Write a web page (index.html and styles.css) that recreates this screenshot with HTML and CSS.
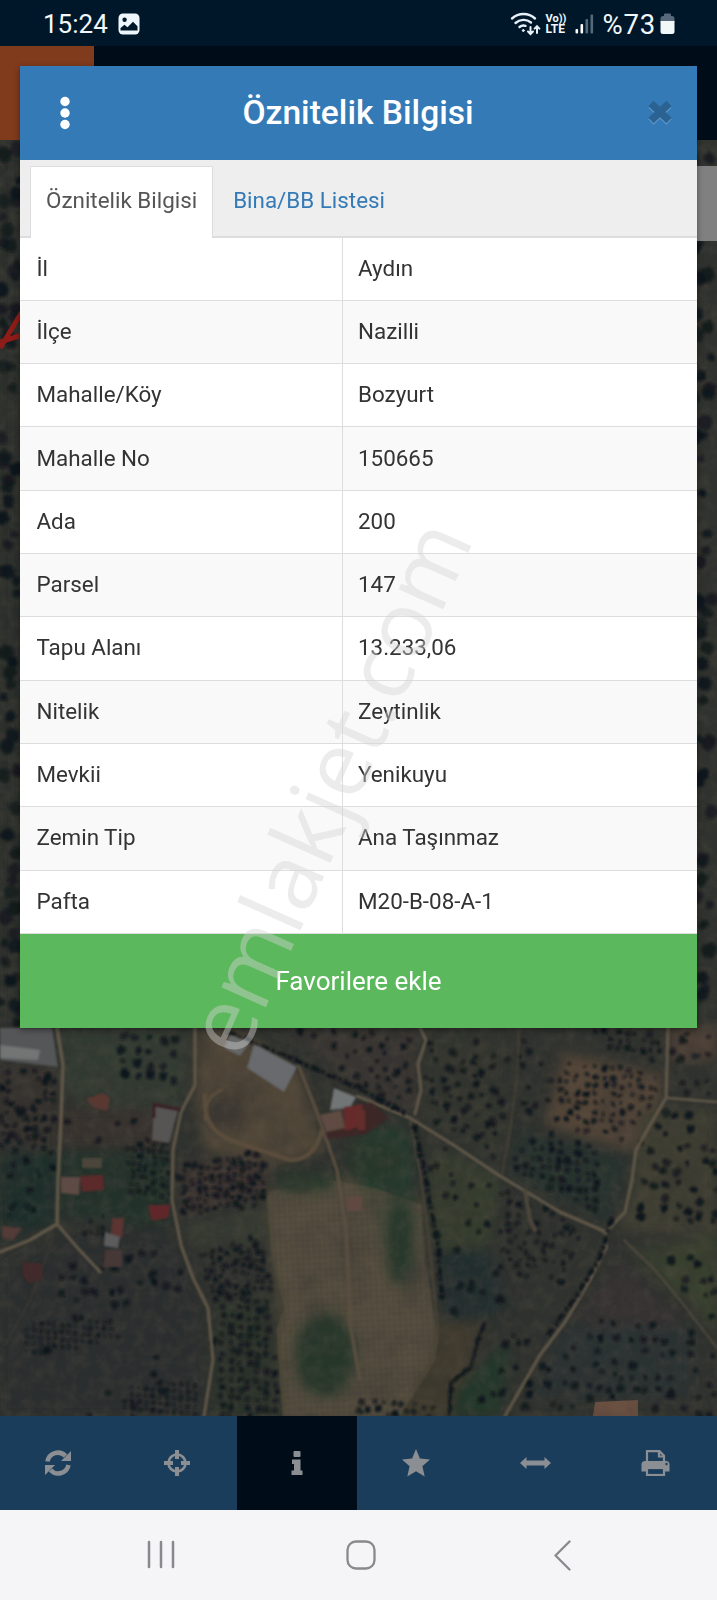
FILE: index.html
```html
<!DOCTYPE html>
<html lang="tr">
<head>
  <meta charset="UTF-8">
  <meta name="viewport" content="width=device-width, initial-scale=1.0">
  <title>Öznitelik Bilgisi</title>
  <link rel="stylesheet" href="styles.css">
</head>
<body>
  <div class="ekran">
    <header class="durum">
      <span class="saat">15:24</span>
      <svg class="ikon-resim" width="22" height="22" viewBox="0 0 22 22">
        <rect x="0.5" y="0.5" width="21" height="21" rx="4.5" fill="#eef6fb"/>
        <circle cx="6.6" cy="6.8" r="2.2" fill="#00172a"/>
        <path d="M2.5 17.5V15l4-3.2 3 2.4 5.5-5.4 4.5 4.5v4.2z" fill="#00172a"/>
      </svg>
      <div class="durum-sag">
        <svg width="31" height="24" viewBox="0 0 31 24" fill="none" stroke="#e8f1f8" stroke-width="2.4" stroke-linecap="round">
          <path d="M2 6.500a17 17 0 0 1 23 0M5.500 11a12 12 0 0 1 15.500 -.5M9.500 15a6.500 6.500 0 0 1 6 -1.200"/>
          <circle cx="13.300" cy="18.500" r="1" fill="#e8f1f8" stroke-width="1"/>
          <path d="M20.500 15v6.500M18 19.500l2.500 2.500 2.500-2.500M27 21v-6.500M24.600 16.600L27 14.200l2.400 2.400" stroke-width="2"/>
        </svg>
        <div class="volte"><span>Vo))</span><span class="lte">LTE</span></div>
        <svg class="sinyal" width="19" height="20" viewBox="0 0 19 20">
          <rect x="0.500" y="15" width="2.600" height="4.500" rx="1" fill="#fff"/>
          <rect x="5.500" y="10" width="2.600" height="9.500" rx="1" fill="#fff"/>
          <rect x="10.500" y="5" width="2.600" height="14.500" rx="1" fill="#56687a"/>
          <rect x="15.500" y="0.500" width="2.600" height="19" rx="1" fill="#56687a"/>
        </svg>
        <span class="yuzde">%73</span>
        <svg width="15" height="22" viewBox="0 0 15 22">
          <path d="M4 3V1.500Q4 .5 5 .5h5q1 0 1 1V3h1q2.500 0 2.500 2.500V9H.5V5.500Q.5 3 3 3z" fill="#56687a"/>
          <path d="M.5 8h14v10.500q0 2.500-2.500 2.500H3q-2.500 0-2.500-2.500z" fill="#f2f7fa"/>
        </svg>
      </div>
    </header>

    <div class="ust-bar"><div class="ust-menu"></div></div>

    <main class="harita">
      <svg id="harita" width="717" height="1276" viewBox="0 140 717 1276">
        <defs>
          <pattern id="izgara" width="5.500" height="6" patternUnits="userSpaceOnUse" patternTransform="rotate(-3)">
            <path d="M0 0H5.500M0 0V6" stroke="#3a3830" stroke-width="1.600"/>
          </pattern>
          <filter id="doku" x="0" y="0" width="100%" height="100%">
            <feTurbulence type="fractalNoise" baseFrequency="0.03" numOctaves="5" seed="4"/>
            <feColorMatrix values="0 0 0 0 .03  0 0 0 0 .03  0 0 0 0 .03  1.500 0 0 0 -.6"/>
          </filter>
          <filter id="kir" x="0" y="0" width="100%" height="100%" color-interpolation-filters="sRGB">
            <feTurbulence type="fractalNoise" baseFrequency="0.09" numOctaves="3" seed="9"/>
            <feColorMatrix values="0 0 0 0 .38  0 0 0 0 .34  0 0 0 0 .29  0 1.600 0 0 -.6"/>
          </filter>
          <filter id="agac" x="-5%" y="-5%" width="110%" height="110%">
            <feTurbulence type="fractalNoise" baseFrequency="0.15" numOctaves="2" seed="3" result="n"/>
            <feDisplacementMap in="SourceGraphic" in2="n" scale="5" xChannelSelector="R" yChannelSelector="G"/>
            <feGaussianBlur stdDeviation="0.800"/>
          </filter>
          <filter id="yumusak"><feGaussianBlur stdDeviation="6"/></filter>
          <filter id="hafif"><feGaussianBlur stdDeviation="0.800"/></filter>
        </defs>

        <rect y="140" width="717" height="1276" fill="#2f322e"/>
        <!-- tarlalar -->
        <g filter="url(#yumusak)">
          <path d="M0 140H22V1030H0z" fill="#2a2d2b"/>
          <path d="M62 1030H190L178 1110 100 1105 62 1090z" fill="#323a30"/>
          <path d="M0 1065H58V1150H0z" fill="#35332e"/>
          <path d="M0 1150H58V1220L0 1240z" fill="#1f2e2b"/>
          <path d="M62 1110H165V1145H62z" fill="#37332f"/>
          <path d="M62 1150H168V1230L62 1215z" fill="#243029"/>
          <path d="M60 1235L165 1225 200 1300 208 1416H0V1270z" fill="#292f2d"/>
          <path d="M215 1300L275 1290 282 1416H208z" fill="#29302c"/>
          <path d="M200 1030H240L300 1075 325 1150 275 1165 205 1150 195 1100z" fill="#514638"/>
          <path d="M205 1095H245V1130H205z" fill="#3d3833"/>
          <path d="M290 1030H415V1112L350 1085z" fill="#373430"/>
          <path d="M180 1165L265 1155 270 1190 185 1215z" fill="#3c3432"/>
          <path d="M185 1225L262 1210 265 1240 195 1250z" fill="#363a30"/>
          <path d="M265 1190L350 1175 420 1195 435 1340 395 1416H285z" fill="#4a4437"/>
          <path d="M360 1125L410 1130 420 1280 390 1275 358 1180z" fill="#273a2d"/>
          <path d="M425 1030H510L500 1170 425 1120z" fill="#33362f"/>
          <path d="M430 1140L500 1180 490 1245 432 1250z" fill="#363d2e"/>
          <path d="M562 1052L665 1075 655 1110 630 1150 545 1125z" fill="#524537"/>
          <path d="M515 1130L630 1155 610 1225 510 1175z" fill="#28322e"/>
          <path d="M640 1110L717 1110V1235L615 1232 632 1190z" fill="#3d3c32"/>
          <path d="M630 1250L717 1235V1330z" fill="#383f2f"/>
          <path d="M440 1250L490 1250 510 1310 445 1330z" fill="#232d2d"/>
          <path d="M620 1260L690 1330 575 1320z" fill="#343131"/>
          <path d="M560 1325H690V1400H530z" fill="#2a3130"/>
          <path d="M440 1320L485 1325 450 1416H400z" fill="#403b2e"/>
          <path d="M455 1390L510 1340 500 1416H450z" fill="#243829"/>
          <path d="M670 1028H717V1060H670z" fill="#514338"/>
        </g>
        <path d="M595 1402L638 1400V1416H593z" fill="#6b5041"/>
        <path d="M268 1192L330 1180 375 1188 422 1205 425 1260 438 1340 434 1362 400 1416H284L278 1330 285 1306 272 1250z" fill="#625847" opacity=".6" filter="url(#hafif)"/>
        <path d="M268 1192L330 1180 375 1188 422 1205 425 1260 438 1340 434 1362 400 1416H284L278 1330 285 1306 272 1250z" fill="url(#izgara)" opacity=".6" filter="url(#hafif)"/>
        <g filter="url(#yumusak)" fill="#27382b">
          <ellipse cx="325" cy="1355" rx="30" ry="42"/>
          <ellipse cx="400" cy="1240" rx="13" ry="45"/>
          <ellipse cx="305" cy="1182" rx="30" ry="10"/>
          <ellipse cx="375" cy="1160" rx="28" ry="22"/>
        </g>
        <rect y="140" width="717" height="1276" filter="url(#doku)" opacity=".5"/>
        <rect y="140" width="717" height="1276" filter="url(#kir)" opacity=".3"/>

        <!-- ağaçlar script ile eklenir -->
        <g id="agaclar" fill="#10161c" filter="url(#agac)"></g>

        <!-- yollar -->
        <g fill="none" stroke="#625849" stroke-width="3" stroke-linecap="round" stroke-linejoin="round" filter="url(#hafif)">
          <path d="M57 1028L63 1065 61 1120 58 1180 57 1224 30 1240 0 1252" stroke-width="3.500"/>
          <path d="M57 1224L75 1245 100 1272"/>
          <path d="M195 1028L195 1085 181 1112 173 1150 172 1200 181 1245 193 1278 208 1308 213 1360 204 1416"/>
          <path d="M298 1064L318 1115 337 1170 346 1230 351 1330 360 1380" stroke="#5b5040"/>
          <path d="M205 1095Q202 1128 230 1140L290 1160Q315 1160 322 1130" stroke="#5b4e3d" stroke-width="4"/>
          <path d="M205 1120Q205 1095 222 1090" stroke="#5b4e3d"/>
          <path d="M357 1096L410 1118 455 1146 500 1176 560 1212 606 1232 625 1212 632 1180 636 1150 650 1125 666 1098 668 1028"/>
          <path d="M606 1232L606 1248 590 1280 565 1322 540 1355 505 1416"/>
          <path d="M624 1240L655 1270 680 1300 717 1348" stroke="#504a40" stroke-width="2"/>
          <path d="M415 1114L421 1090 418 1064 426 1040 420 1028"/>
          <path d="M502 1174L510 1130 517 1080 519 1030" stroke="#433f36" stroke-width="2"/>
          <path d="M668 1098L717 1102" stroke-width="2.500"/>
          <path d="M410 1120L420 1170 430 1250 438 1330 432 1362 415 1385" stroke="#494437" stroke-width="2"/>
          <path d="M525 1190L530 1220 535 1230" stroke="#4d463d" stroke-width="4"/>
          <path d="M268 1196L273 1260 286 1308 278 1330 284 1416" stroke="#4f4a3b" stroke-width="2"/>
          <path d="M54 1235L30 1300 5 1345" stroke="#373633" stroke-width="2"/>
        </g>
        <g fill="none" stroke="#11161c" stroke-width="4" stroke-dasharray="9 2 4 3" filter="url(#agac)">
          <path d="M228 1032L300 1062 360 1089 405 1113"/>
          <path d="M414 1125L426 1180 438 1245 442 1300"/>
          <path d="M612 1218L598 1262 577 1295 548 1335"/>
          <path d="M484 1322L470 1368 452 1382 449 1416" stroke-dasharray="none" stroke-width="2.500"/>
        </g>

        <!-- binalar -->
        <g filter="url(#hafif)">
          <path d="M0 1028H52L58 1067 0 1060z" fill="#545659"/>
          <path d="M0 1045L40 1050 38 1060 0 1058z" fill="#737475"/>
          <path d="M230 1035L250 1042 240 1056 224 1048z" fill="#666768"/>
          <path d="M254 1044L297 1067 284 1092 247 1068z" fill="#686b6e"/>
          <path d="M334 1088L356 1097 350 1108 330 1110z" fill="#727476"/>
          <path d="M344 1107L372 1103 388 1118 366 1134 328 1139 325 1128 344 1122z" fill="#3c2527"/>
          <path d="M343 1108L362 1104 364 1125 345 1131z" fill="#662c2b"/>
          <path d="M320 1115L341 1110 345 1128 326 1132z" fill="#5e4b43"/>
          <path d="M154 1106L178 1110 169 1143 152 1140z" fill="#575452"/>
          <path d="M154 1118V1105L180 1110" fill="none" stroke="#3b1f25" stroke-width="3"/>
          <path d="M86 1099L103 1093 110 1098 108 1111 95 1108z" fill="#5a3733"/>
          <path d="M61 1177L80 1177 79 1195 61 1193z" fill="#5f4b45"/>
          <path d="M80 1176L103 1175 104 1190 82 1192z" fill="#5c292b"/>
          <path d="M148 1205L170 1205 168 1218 152 1221z" fill="#60282a"/>
          <path d="M112 1218L124 1218 122 1238 111 1238z" fill="#5c3431"/>
          <path d="M105 1232L120 1237 118 1248 104 1246z" fill="#5c5c5d"/>
          <path d="M105 1250H122V1267H103z" fill="#463738"/>
          <path d="M23 1262L42 1264 43 1278 30 1284 23 1276z" fill="#432a2b"/>
          <path d="M2 1226L22 1228 13 1240 2 1238z" fill="#533a37"/>
          <path d="M346 1196H362V1211H347z" fill="#5f483f"/>
          <path d="M82 1158H102V1168H82z" fill="#4b443a"/>
          <path d="M358 1110H365V1130H358z" fill="#622d2b"/>
        </g>
        <path d="M0 348L22 312M0 342L22 335" stroke="#8e1c18" stroke-width="5" fill="none"/>
        <rect x="690" y="166" width="27" height="75" fill="#808080"/>
      </svg>
    </main>

    <nav class="araclar">
      <div class="arac">
        <svg width="28" height="28" viewBox="0 0 28 28" fill="none" stroke="#8b8f93" stroke-width="4.500">
          <path d="M3.500 12.500A10.500 10.500 0 0 1 21.500 7M24.500 16A10.500 10.500 0 0 1 6.500 21"/>
          <path d="M27 2v10H17zM1 26V16H11z" fill="#8b8f93" stroke="none"/>
        </svg>
      </div>
      <div class="arac">
        <svg width="26" height="26" viewBox="0 0 26 26" fill="none" stroke="#8b8f93">
          <circle cx="13" cy="13" r="8.500" stroke-width="2.600"/>
          <path d="M13 0v9M13 17v9M0 13h9M17 13h9" stroke-width="4"/>
        </svg>
      </div>
      <div class="arac aktif">
        <svg width="12" height="26" viewBox="0 0 12 26" fill="#8b8f93">
          <rect x="2.500" y="1" width="7" height="6" rx="1"/>
          <path d="M1 9.500H9.500V20.500H11.500V25H.5V20.500H3V14H1z"/>
        </svg>
      </div>
      <div class="arac">
        <svg width="28" height="28" viewBox="0 0 28 28" fill="#8b8f93">
          <path d="M14 0l3.900 9.600L28 10.600l-7.600 6.700L22.700 27.500 14 22.200 5.300 27.500l2.300-10.200L0 10.600l10.100-1z"/>
        </svg>
      </div>
      <div class="arac">
        <svg width="31" height="12" viewBox="0 0 31 12" fill="#8b8f93">
          <path d="M0 6L6.500 0V3.500H24.500V0L31 6 24.500 12V8.500H6.500V12z"/>
        </svg>
      </div>
      <div class="arac">
        <svg width="29" height="26" viewBox="0 0 29 26">
          <path d="M6 12V1.200H18.500L23 5.700V12M18 1v5.500h5" fill="none" stroke="#8b8f93" stroke-width="2.200"/>
          <path d="M4 11H25q3.500 0 3.500 3.500V21.500H.5V14.500Q.5 11 4 11z" fill="#8b8f93"/>
          <rect x="6" y="18" width="17" height="7" fill="#1b3d5c" stroke="#8b8f93" stroke-width="2.200"/>
          <circle cx="25.500" cy="14" r="1.200" fill="#1b3d5c"/>
        </svg>
      </div>
    </nav>

    <footer class="gezinme">
      <svg width="28" height="30" viewBox="0 0 28 30" stroke="#89898c" stroke-width="2.500" stroke-linecap="round">
        <path d="M2 2v25M14 2v25M26 2v25"/>
      </svg>
      <svg class="ana-ekran" width="30" height="30" viewBox="0 0 30 30" fill="none" stroke="#89898c" stroke-width="2.300">
        <rect x="1.500" y="1.500" width="27" height="27" rx="8.500"/>
      </svg>
      <svg width="17" height="31" viewBox="0 0 17 31" fill="none" stroke="#89898c" stroke-width="2.300" stroke-linecap="round" stroke-linejoin="round">
        <path d="M15.500 1.500L1.500 15.500 15.500 29.500"/>
      </svg>
    </footer>

    <section class="pencere">
      <div class="pencere-baslik">
        <svg width="10" height="34" viewBox="0 0 10 34" fill="#fff">
          <circle cx="5" cy="5.500" r="4.700"/><circle cx="5" cy="17" r="4.700"/><circle cx="5" cy="28.500" r="4.700"/>
        </svg>
        <h1>Öznitelik Bilgisi</h1>
        <svg width="24" height="26" viewBox="0 0 24 26" fill="none" stroke-width="7.500">
          <path d="M3 5L21 22M21 5L3 22" stroke="#5e98ca"/>
          <path d="M3 3.500L21 20.500M21 3.500L3 20.500" stroke="#2a6291"/>
        </svg>
      </div>
      <div class="sekmeler">
        <a class="sekme secili">Öznitelik Bilgisi</a>
        <a class="sekme">Bina/BB Listesi</a>
      </div>
      <table class="bilgi">
        <tr><td>İl</td><td>Aydın</td></tr>
        <tr><td>İlçe</td><td>Nazilli</td></tr>
        <tr><td>Mahalle/Köy</td><td>Bozyurt</td></tr>
        <tr><td>Mahalle No</td><td>150665</td></tr>
        <tr><td>Ada</td><td>200</td></tr>
        <tr><td>Parsel</td><td>147</td></tr>
        <tr><td>Tapu Alanı</td><td>13.233,06</td></tr>
        <tr><td>Nitelik</td><td>Zeytinlik</td></tr>
        <tr><td>Mevkii</td><td>Yenikuyu</td></tr>
        <tr><td>Zemin Tip</td><td>Ana Taşınmaz</td></tr>
        <tr><td>Pafta</td><td>M20-B-08-A-1</td></tr>
      </table>
      <button class="favori">Favorilere ekle</button>
    </section>

    <svg class="filigran" width="717" height="1600" viewBox="0 0 717 1600">
      <text transform="translate(242 1061) rotate(-66)" textLength="571">emlakjet.com</text>
    </svg>
  </div>

  <script src="harita.js"></script>
</body>
</html>
```

FILE: styles.css
```css
:root {
  --mavi: #337ab7;
  --lacivert: #1b3d5c;
  --koyu: #000d18;
  --yesil: #5cb85c;
  --cizgi: #dddddd;
}

* {
  box-sizing: border-box;
}

body {
  margin: 0;
  font-family: Roboto, "Noto Sans", sans-serif;
  font-size: 22.4px;
  color: #333;
}

.ekran {
  position: relative;
  display: flex;
  flex-direction: column;
  width: 717px;
  height: 1600px;
  overflow: hidden;
}

/* Durum çubuğu */
.durum {
  display: flex;
  align-items: center;
  height: 46px;
  padding: 2px 42px 0 43px;
  background-color: #00172a;
  color: #f2f8fc;
  font-size: 26px;
}

.saat {
  width: 75px;
}

.durum-sag {
  display: flex;
  align-items: center;
  margin-left: auto;
}

.volte {
  display: flex;
  flex-direction: column;
  width: 21px;
  margin: 0 8px 0 5px;
  font-size: 11px;
  font-weight: 700;
  line-height: 11px;
  white-space: nowrap;
}

.lte {
  font-size: 12px;
}

.yuzde {
  margin: 0 4px 0 9px;
  font-size: 27.5px;
  letter-spacing: 0.8px;
}

.ust-bar {
  height: 94px;
  background-color: var(--koyu);
}

.ust-menu {
  width: 94px;
  height: 94px;
  background-color: #803a1c;
}

.harita {
  height: 1276px;
}

.harita svg {
  display: block;
}

/* Alt araç çubuğu */
.araclar {
  display: flex;
  height: 94px;
  margin-left: -2px;
  padding-right: 2px;
  background-color: var(--lacivert);
}

.arac {
  display: flex;
  flex: 1;
  align-items: center;
  justify-content: center;
}

.arac.aktif {
  background-color: var(--koyu);
}

.gezinme {
  display: flex;
  align-items: center;
  justify-content: space-between;
  height: 90px;
  padding: 0 146px 0 147px;
  background-color: #f5f5f8;
}

.ana-ekran {
  margin-right: 7px;
}

/* Bilgi penceresi */
.pencere {
  position: absolute;
  top: 66px;
  left: 20px;
  width: 677px;
  background-color: #fff;
  box-shadow: 0 2px 6px rgba(0,0,0,0.4);
}

.pencere-baslik {
  display: flex;
  align-items: center;
  justify-content: space-between;
  height: 94px;
  padding: 0 25px 1px 40px;
  background-color: var(--mavi);
  color: #fff;
}

.pencere-baslik h1 {
  margin: 0 2px 1px 0;
  font-size: 33.6px;
  font-weight: 500;
}

.sekmeler {
  display: flex;
  height: 78px;
  padding: 6px 10px 0;
  background-color: #eee;
  border-bottom: 2px solid var(--cizgi);
}

.sekme {
  display: flex;
  align-items: center;
  height: 72px;
  padding: 0 15px 4px;
  margin-right: 4px;
  border: 1px solid transparent;
  color: var(--mavi);
}

.sekme.secili {
  padding-bottom: 5px;
  background-color: #fff;
  border-color: var(--cizgi);
  border-bottom: 0;
  color: #555;
}

.bilgi {
  width: 100%;
  height: 696px;
  border-collapse: collapse;
  table-layout: fixed;
}

.bilgi td {
  padding: 0 15.5px 2px;
  border-bottom: 1px solid var(--cizgi);
}

.bilgi td:first-child {
  width: 322px;
  padding-left: 16.5px;
  border-right: 1px solid var(--cizgi);
}

.bilgi tr:nth-child(even) {
  background-color: #f9f9f9;
}

.favori {
  display: block;
  width: 100%;
  height: 94px;
  padding: 0 0 1px;
  border: 0;
  background-color: var(--yesil);
  color: #fff;
  font: 26px Roboto, sans-serif;
}

.filigran {
  position: absolute;
  top: 0;
  left: 0;
  pointer-events: none;
}

.filigran text {
  font: 91px "Open Sans", sans-serif;
  fill: rgba(210,210,210,0.43);
}
```

FILE: harita.js
```js
const agaclar = document.getElementById('agaclar');

// Sabit tohumlu rastgele sayı
let tohum = 17;
function rastgele() {
  tohum = (tohum * 16807) % 2147483647;
  return tohum / 2147483647;
}

// k: köşeler, a: aralık, r: yarıçap, d: dağınıklık, p: doluluk
const alanlar = [
  { k: [[0,140],[24,140],[24,1028],[0,1028]], a: 13, r: 6.5, d: 13, p: 0.6 },
  { k: [[693,140],[717,140],[717,1028],[693,1028]], a: 13, r: 6.5, d: 13, p: 0.55 },
  { k: [[0,1070],[55,1070],[55,1150],[0,1150]], a: 9, r: 3.2, d: 7, p: 0.85 },
  { k: [[0,1150],[55,1150],[55,1220],[0,1220]], a: 13, r: 3.2, d: 10, p: 0.6 },
  { k: [[110,1035],[188,1035],[188,1085],[120,1078]], a: 13, r: 4.2, d: 5, p: 0.9 },
  { k: [[64,1085],[150,1095],[150,1145],[64,1140]], a: 16, r: 3.4, d: 13, p: 0.35 },
  { k: [[126,1146],[170,1142],[170,1202],[128,1195]], a: 7, r: 2.3, d: 4, p: 0.9 },
  { k: [[178,1165],[262,1150],[268,1205],[178,1215]], a: 7, r: 2.9, d: 5, p: 0.9 },
  { k: [[200,1252],[265,1235],[272,1290],[212,1300]], a: 7, r: 2.6, d: 4, p: 0.9 },
  { k: [[213,1300],[274,1288],[280,1416],[216,1416]], a: 9, r: 3.1, d: 4, p: 0.9 },
  { k: [[60,1250],[180,1250],[185,1290],[60,1325]], a: 13, r: 3.7, d: 10, p: 0.6 },
  { k: [[20,1325],[110,1315],[120,1340],[25,1355]], a: 7, r: 2, d: 1, p: 1 },
  { k: [[0,1340],[200,1320],[198,1416],[0,1416]], a: 22, r: 3.4, d: 20, p: 0.35 },
  { k: [[125,1385],[198,1380],[198,1416],[125,1416]], a: 7, r: 2.1, d: 1, p: 1 },
  { k: [[85,1220],[108,1215],[108,1240],[85,1235]], a: 6, r: 2, d: 1, p: 0.9 },
  { k: [[295,1030],[415,1030],[415,1110],[360,1088]], a: 10, r: 3, d: 9, p: 0.7 },
  { k: [[425,1040],[510,1040],[500,1165],[425,1115]], a: 10, r: 3.1, d: 8, p: 0.65 },
  { k: [[425,1135],[495,1180],[490,1240],[435,1240]], a: 16, r: 3.2, d: 12, p: 0.6 },
  { k: [[520,1030],[560,1060],[545,1130],[515,1130]], a: 12, r: 3.1, d: 9, p: 0.35 },
  { k: [[595,1030],[660,1030],[660,1065],[598,1045]], a: 8, r: 2.7, d: 3, p: 0.9 },
  { k: [[562,1055],[660,1075],[655,1110],[625,1140],[550,1125]], a: 9, r: 2.7, d: 5, p: 0.85 },
  { k: [[515,1130],[605,1140],[600,1215],[515,1170]], a: 9, r: 3.2, d: 4, p: 0.9 },
  { k: [[500,1185],[590,1225],[575,1290],[500,1270]], a: 9, r: 2.7, d: 6, p: 0.75 },
  { k: [[645,1110],[717,1110],[717,1225],[630,1225]], a: 12, r: 3.9, d: 9, p: 0.65 },
  { k: [[672,1030],[717,1030],[717,1095],[672,1095]], a: 12, r: 3.4, d: 9, p: 0.7 },
  { k: [[650,1255],[717,1250],[717,1330]], a: 13, r: 3.4, d: 10, p: 0.6 },
  { k: [[440,1245],[500,1245],[510,1310],[442,1320]], a: 15, r: 4, d: 12, p: 0.5 },
  { k: [[565,1320],[700,1320],[700,1355],[550,1350]], a: 13, r: 3.3, d: 6, p: 0.7 },
  { k: [[535,1355],[680,1345],[680,1395],[515,1416]], a: 12, r: 3.6, d: 7, p: 0.65 },
  { k: [[485,1330],[540,1330],[500,1410],[480,1410]], a: 12, r: 3.4, d: 8, p: 0.55 },
  { k: [[640,1385],[717,1350],[717,1416],[640,1416]], a: 14, r: 3.4, d: 10, p: 0.6 },
  { k: [[350,1400],[440,1400],[440,1416],[350,1416]], a: 9, r: 3, d: 6, p: 0.7 }
];

function icinde(x, y, k) {
  let sonuc = false;
  for (let i = 0, j = k.length - 1; i < k.length; j = i++) {
    const [xi, yi] = k[i];
    const [xj, yj] = k[j];
    if ((yi > y) !== (yj > y) && x < (xj - xi) * (y - yi) / (yj - yi) + xi) {
      sonuc = !sonuc;
    }
  }
  return sonuc;
}

let cizim = '';
alanlar.forEach(({ k, a, r, d, p }) => {
  const xs = k.map(n => n[0]);
  const ys = k.map(n => n[1]);
  for (let y = Math.min(...ys); y < Math.max(...ys); y += a) {
    for (let x = Math.min(...xs); x < Math.max(...xs); x += a) {
      const px = x + (rastgele() - 0.5) * d;
      const py = y + (x - xs[0]) * 0.08 + (rastgele() - 0.5) * d;
      if (rastgele() > p || !icinde(px, py, k)) continue;
      const boy = r * (0.6 + rastgele() * 0.6);
      cizim += `<circle cx="${px.toFixed(1)}" cy="${py.toFixed(1)}" r="${boy.toFixed(1)}" opacity="${(0.6 + rastgele() * 0.4).toFixed(2)}"/>`;
    }
  }
});
agaclar.innerHTML = cizim;
```
